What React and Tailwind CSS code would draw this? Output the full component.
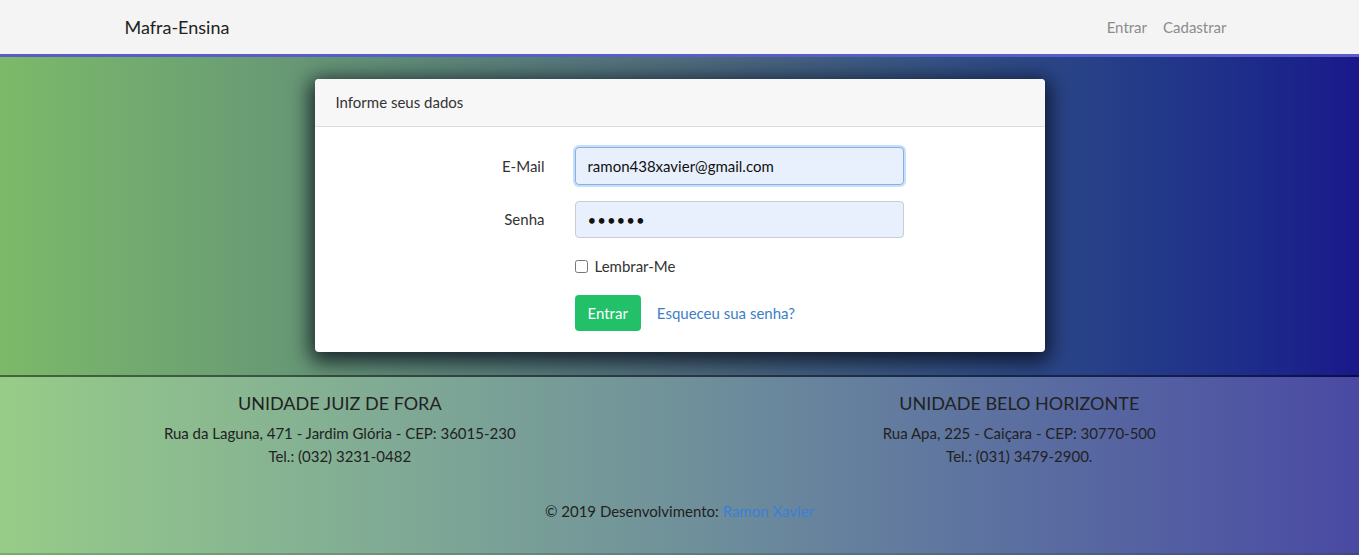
import { useState } from "react";

// Login page: navbar, gradient hero with form card, two-unit footer
const units = [
  {
    name: "UNIDADE JUIZ DE FORA",
    address: "Rua da Laguna, 471 - Jardim Glória - CEP: 36015-230",
    phone: "Tel.: (032) 3231-0482",
  },
  {
    name: "UNIDADE BELO HORIZONTE",
    address: "Rua Apa, 225 - Caiçara - CEP: 30770-500",
    phone: "Tel.: (031) 3479-2900.",
  },
];

const Navbar = () => (
  <nav className="h-[57px] bg-[#f4f4f4] border-b-[3px] border-[#5b5dc6]">
    <div className="w-[1110px] mx-auto h-full flex items-center justify-between">
      <a className="text-[18px] text-[#222] pt-[1px]">Mafra-Ensina</a>
      <div className="flex items-center gap-[16px] pr-[8px] text-[15px] text-[#8c8c8c]">
        <a>Entrar</a>
        <a>Cadastrar</a>
      </div>
    </div>
  </nav>
);

const LoginCard = () => {
  const [email, setEmail] = useState("ramon438xavier@gmail.com");
  const [password, setPassword] = useState("123456");

  return (
    <div className="w-[730px] mx-auto bg-white rounded-[4px] shadow-[0_5px_20px_5px_rgba(8,12,28,0.8)]">
      <div className="h-[48px] flex items-center px-[21px] bg-[#f7f7f7] border-b border-[#dcdcdc] rounded-t-[4px] text-[15px] text-[#333]">
        Informe seus dados
      </div>
      <div className="px-[20px] pt-[20px] pb-[21px] text-[15px] text-[#333]">
        <div className="flex items-center mb-[16px]">
          <label className="w-[210px] text-right">E-Mail</label>
          <input
            className="ml-[30px] w-[329px] h-[38px] px-[12px] rounded-[4px] bg-[#e8f0fe] text-[#111] border border-[#80b3ea] shadow-[0_0_0_2px_rgba(110,160,225,0.35)] outline-none"
            value={email}
            onChange={(e) => setEmail(e.target.value)}
          />
        </div>
        <div className="flex items-center mb-[16px]">
          <label className="w-[210px] text-right">Senha</label>
          <input
            type="password"
            className="ml-[30px] w-[329px] h-[37px] px-[12px] rounded-[4px] bg-[#e8f0fe] text-[#111] border border-[#c8ccd4] outline-none tracking-[1px]"
            value={password}
            onChange={(e) => setPassword(e.target.value)}
          />
        </div>
        <div className="flex items-center ml-[240px] h-[24px] mb-[17px]">
          <input type="checkbox" className="w-[13px] h-[13px] mr-[7px]" />
          <span>Lembrar-Me</span>
        </div>
        <div className="flex items-center ml-[240px]">
          <button className="h-[36px] px-[13px] rounded-[4px] bg-[#22c068] text-white text-[15px]">
            Entrar
          </button>
          <a className="ml-[16px] text-[#3d7fc6]">Esqueceu sua senha?</a>
        </div>
      </div>
    </div>
  );
};

const Footer = () => (
  <footer className="h-[178px] bg-gradient-to-r from-[#97cc88] via-[#70919a] to-[#4a49a3] border-b-2 border-[rgba(40,70,40,0.25)] text-[#222]">
    <div className="grid grid-cols-2 pt-[13px]">
      {units.map((u) => (
        <div key={u.name} className="text-center">
          <h3 className="text-[18px] leading-[26px] mb-[6px]">{u.name}</h3>
          <p className="text-[15px] leading-[23px]">{u.address}</p>
          <p className="text-[15px] leading-[23px]">{u.phone}</p>
        </div>
      ))}
    </div>
    <p className="text-center text-[15px] mt-[32px]">
      © 2019 Desenvolvimento: <a className="text-[#3a7fd8]">Ramon Xavier</a>
    </p>
  </footer>
);

export default function App() {
  return (
    <div className="w-[1359px] h-[555px] overflow-hidden font-['Lato',sans-serif]">
      <Navbar />
      <section className="h-[320px] pt-[22px] bg-gradient-to-r from-[#7cba68] via-[#4f6c7c] to-[#1a178b] border-b-2 border-[rgba(0,0,0,0.45)]">
        <LoginCard />
      </section>
      <Footer />
    </div>
  );
}
